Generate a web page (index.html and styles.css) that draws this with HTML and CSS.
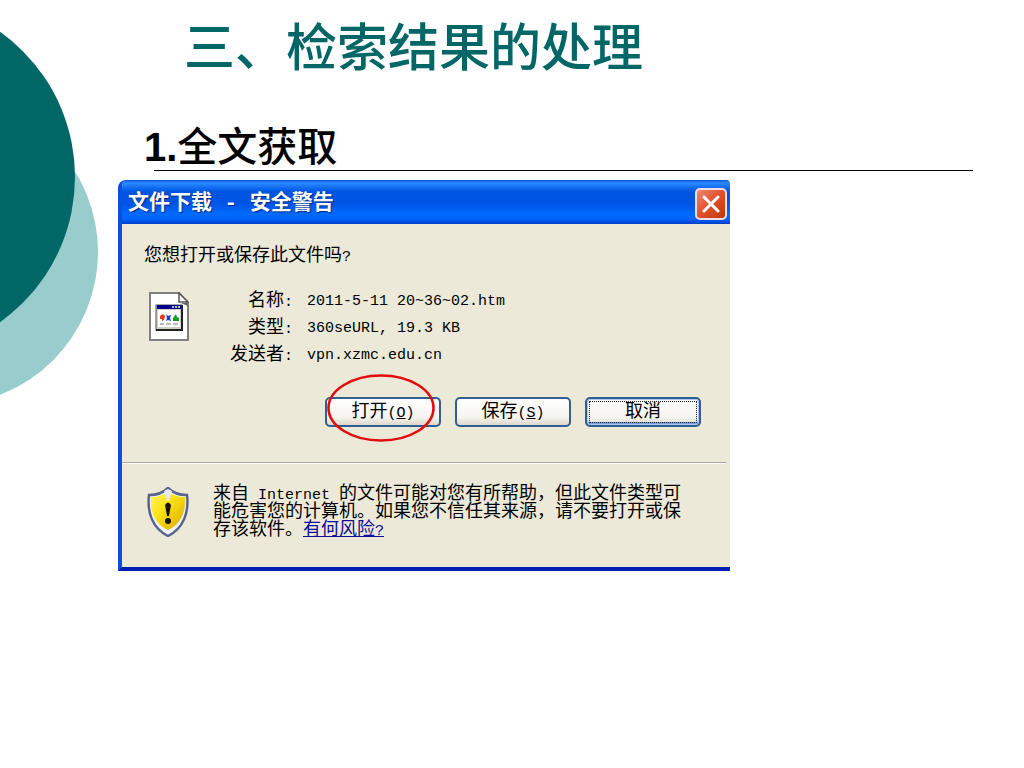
FILE: index.html
```html
<!DOCTYPE html>
<html lang="zh-CN">
<head>
<meta charset="utf-8">
<title>三、检索结果的处理</title>
<link rel="stylesheet" href="styles.css">
</head>
<body>
<main class="slide">
  <svg class="decor" width="100" height="400" viewBox="0 0 100 400" aria-hidden="true">
    <circle cx="-55" cy="252" r="153" fill="#99cccc"/>
    <circle cx="-103" cy="177" r="178" fill="#006666"/>
  </svg>
  <h1 class="slide-title">三、检索结果的处理</h1>
  <h2 class="section-title"><b>1.</b>全文获取</h2>
  <hr class="rule">
  <section class="dialog" aria-labelledby="dialog-title">
    <header class="titlebar">
      <h3 class="dialog-title" id="dialog-title">文件下载 - 安全警告</h3>
      <button class="close" type="button" aria-label="关闭">
        <svg width="18" height="18" viewBox="0 0 18 18" aria-hidden="true"><path d="M2 2L16 16M16 2L2 16" stroke="#fff" stroke-width="3" stroke-linecap="round"/></svg>
      </button>
    </header>
    <div class="content">
      <p class="question">您想打开或保存此文件吗<span class="latin">?</span></p>
      <div class="file">
        <svg class="file-icon" width="40" height="50" viewBox="0 0 40 50" aria-hidden="true">
          <path d="M1 1H30L39 11V48H1Z" fill="#fff" stroke="#808080" stroke-width="2"/>
          <path d="M30 1V10H39Z" fill="#f4f4f4" stroke="#555" stroke-width="1.5"/>
          <path d="M32 11H39V14Z" fill="#666"/>
          <rect x="7" y="13" width="26" height="25" fill="#d4d0c8" stroke="#555"/>
          <path d="M7 38H33V13" fill="none" stroke="#222" stroke-width="2"/>
          <rect x="8" y="13" width="24" height="4" fill="#000087"/>
          <path d="M23 15h2M26 15h2M29 15h2" stroke="#fff" stroke-width="1.5"/>
          <rect x="9" y="18" width="22" height="17" fill="#fff"/>
          <path d="M11 24l3-2 2 2-1 4-2 1 0-2-2 0z" fill="#e33a10"/>
          <path d="M17 22l2 2 3-1-1 3 1 3-3-1-2 1 1-3z" fill="#1638e0"/>
          <path d="M24 29l0-3 3-4 1 3 2 1v3z" fill="#139b2d"/>
          <path d="M11 32h4M17 32h5M24 32h5" stroke="#777" stroke-width="1"/>
        </svg>
        <dl class="details">
          <dt>名称<span class="latin">:</span></dt><dd>2011-5-11 20~36~02.htm</dd>
          <dt>类型<span class="latin">:</span></dt><dd>360seURL, 19.3 KB</dd>
          <dt>发送者<span class="latin">:</span></dt><dd>vpn.xzmc.edu.cn</dd>
        </dl>
      </div>
      <div class="actions">
        <div class="marked">
          <button class="btn" type="button">打开<span class="latin">(<u>O</u>)</span></button>
          <svg class="ring" width="108" height="68" viewBox="0 0 108 68" aria-hidden="true"><ellipse cx="54" cy="34" rx="52.5" ry="32.5" fill="none" stroke="#e30b0b" stroke-width="2.6"/></svg>
        </div>
        <button class="btn" type="button">保存<span class="latin">(<u>S</u>)</span></button>
        <button class="btn btn-default" type="button">取消</button>
      </div>
    </div>
    <footer class="warning">
      <svg class="shield" width="42" height="50" viewBox="0 0 42 50" aria-hidden="true">
        <defs><linearGradient id="gold" x1="0" x2="1" y1="0" y2="1"><stop offset="0" stop-color="#fff36a"/><stop offset=".4" stop-color="#fbe312"/><stop offset="1" stop-color="#dca800"/></linearGradient></defs>
        <path d="M21 1C16 6 9 8 2 8C0 25 5 41 21 49C37 41 42 25 40 8C33 8 26 6 21 1Z" fill="#eef0f8" stroke="#59648c" stroke-width="2.5"/>
        <path d="M21 4C16 8 11 10 4 10C3 25 8 37 21 43C34 37 39 25 38 10C31 10 26 8 21 4Z" fill="url(#gold)"/>
        <path d="M17 4L21 2L25 4L22 14H20Z" fill="#e8eaf0"/>
        <path d="M18 18Q21 13 24 18L22 29H20Z" fill="#171200"/>
        <circle cx="21" cy="34" r="3" fill="#171200"/>
      </svg>
      <p class="warning-text">来自<span class="latin"> Internet </span>的文件可能对您有所帮助，但此文件类型可能危害您的计算机。如果您不信任其来源，请不要打开或保存该软件。<a href="#risk">有何风险<span class="latin">?</span></a></p>
    </footer>
  </section>
</main>
</body>
</html>
```
FILE: styles.css
```css
* { box-sizing: border-box; }
body {
  margin: 0;
  background: #fff;
  color: #000;
  font-family: "Liberation Sans", "Noto Sans CJK SC", sans-serif;
}
h1, h2, h3, p, dl, dd { margin: 0; font-weight: 400; }
.slide {
  position: relative;
  min-height: 100vh;
  padding: 17px 51px 32px 118px;
  overflow: hidden;
}
.decor { position: absolute; left: 0; top: 0; }
.slide-title {
  padding-left: 66px;
  color: #006666;
  font-size: 51px;
  font-weight: 500;
  line-height: 64px;
}
.section-title {
  margin-top: 44px;
  padding-left: 26px;
  font-size: 40px;
  font-weight: 500;
  line-height: 45px;
}
.rule {
  height: 1px;
  margin: 0 0 9px 36px;
  border: 0;
  background: #000;
}
.dialog {
  max-width: 612px;
  border-left: 4px solid #0a50e0;
  border-bottom: 4px solid #0020b4;
  border-radius: 8px 4px 0 0;
  background: #ece9d8;
  overflow: hidden;
  font-family: "Liberation Mono", "Noto Sans CJK SC", monospace;
  font-size: 18px;
  line-height: 18px;
}
.titlebar {
  display: flex;
  align-items: center;
  justify-content: space-between;
  height: 44px;
  margin-left: -4px;
  padding: 4px 3px 0 10px;
  background: linear-gradient(#0a50d8 0, #2b8cff 3px, #1470f4 7px, #0054e0 12px, #0054e6 24px, #006aff 34px, #0064fa 39px, #0040c8 44px);
}
.dialog-title {
  color: #fff;
  font-size: 21px;
  font-weight: 700;
  line-height: 28px;
  text-shadow: 1px 1px 1px #002a80;
}
.close {
  display: flex;
  align-items: center;
  justify-content: center;
  width: 32px;
  height: 32px;
  padding: 0;
  border: 2px solid #f0dcea;
  border-radius: 5px;
  background: linear-gradient(135deg, #ec8a70, #e0502c 50%, #bc3808);
}
.content { padding: 22px 29px 35px 22px; }
.latin, .details dd { font-size: 15px; }
.latin { line-height: 1; }
.question { line-height: 20px; }
.file {
  display: flex;
  gap: 28px;
  margin-top: 22px;
  padding-left: 5px;
}
.file-icon { margin-top: 4px; }
.details {
  display: grid;
  grid-template-columns: 76px 1fr;
  grid-auto-rows: 27px;
  column-gap: 14px;
  line-height: 27px;
}
.details dt { text-align: right; white-space: nowrap; }
.actions {
  display: flex;
  justify-content: flex-end;
  gap: 14px;
  margin-top: 28px;
}
.marked { position: relative; }
.ring { position: absolute; left: 2px; top: -23px; pointer-events: none; }
.btn {
  display: block;
  width: 116px;
  height: 30px;
  padding: 0;
  border: 2px solid #315f92;
  border-radius: 5px;
  background: linear-gradient(#fff, #f5f4ef 70%, #dcd8cc);
  color: #000;
  font: inherit;
}
.btn-default {
  box-shadow: inset 0 0 0 1px #a9c4ee, inset 0 -3px 0 #7d9de0;
  outline: 1px dotted #222;
  outline-offset: -5px;
}
.warning {
  display: flex;
  gap: 24px;
  margin-right: 4px;
  padding: 22px 32px 28px 25px;
  border-top: 1px solid #aca899;
  box-shadow: inset 0 1px 0 #fff;
}
.shield { flex: none; margin-top: 2px; }
.warning-text { max-width: 480px; }
.warning-text .latin { white-space: pre-wrap; }
.warning-text a { color: #0b0b9c; }
```
